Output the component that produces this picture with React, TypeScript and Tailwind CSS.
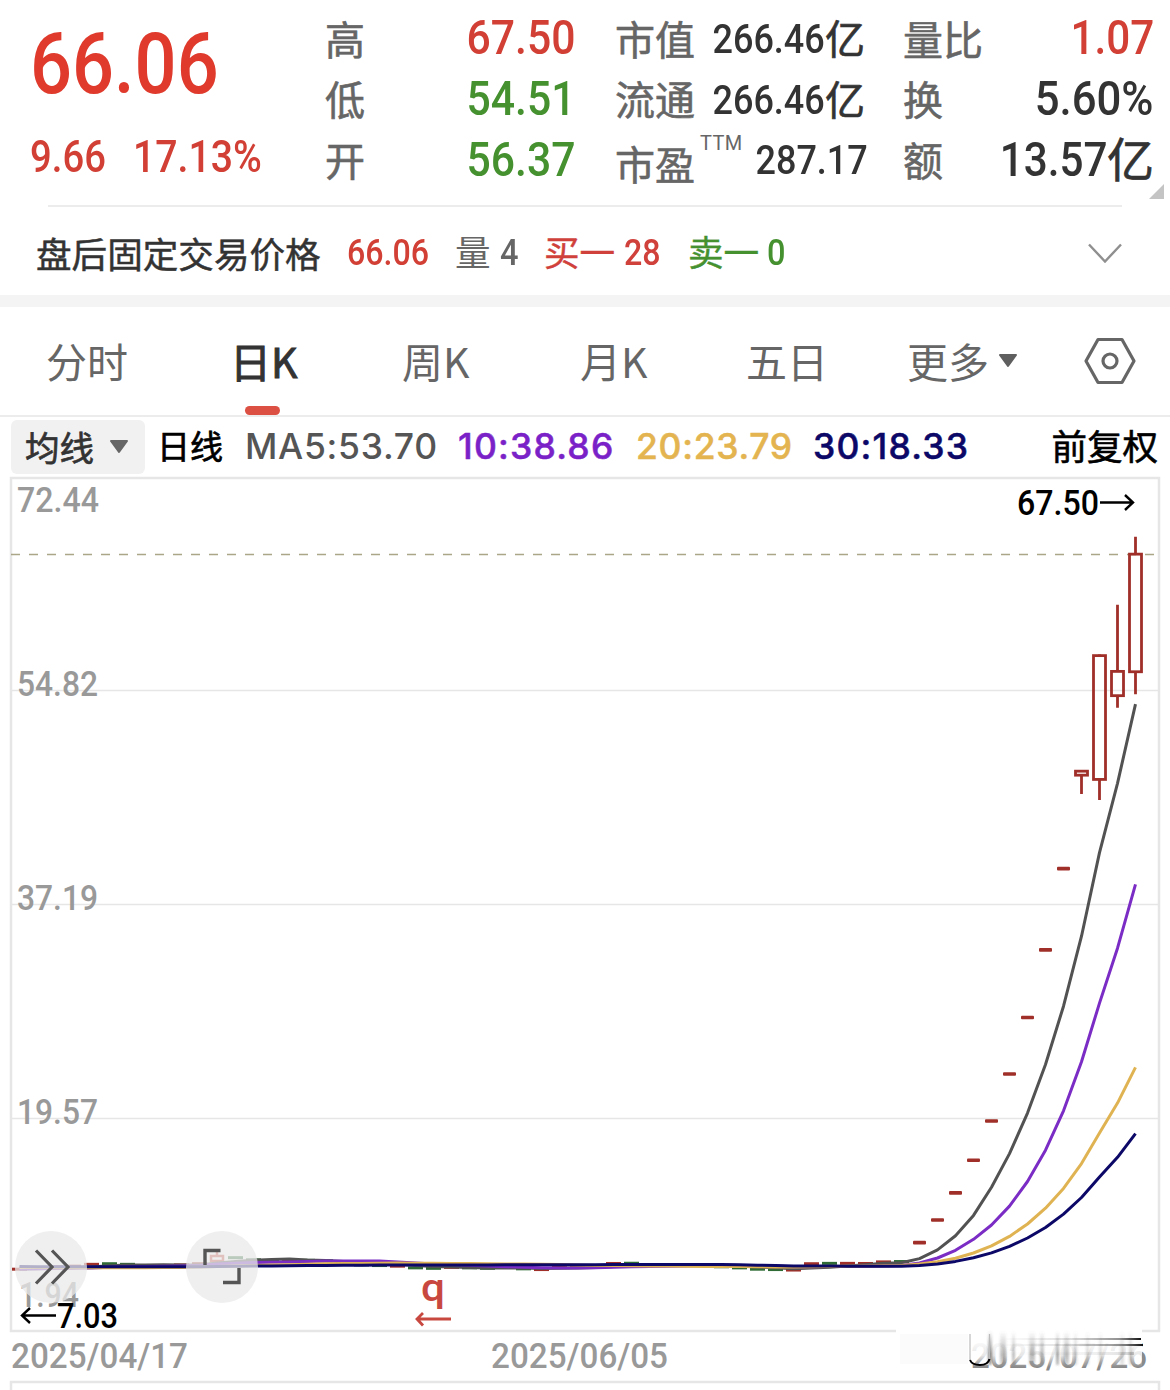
import React from 'react';

interface Candle {
    open: number;
    close: number;
    high: number;
    low: number;
}

const TOP_PRICE = 72.44;
const TOP_Y = 476.7;
const PX_PER_UNIT = 12.138;
const FIRST_X = 19.5;
const STEP = 18;

const RED = '#9f2f28';
const GREEN = '#2f6b35';

const toY = (price: number) => TOP_Y + (TOP_PRICE - price) * PX_PER_UNIT;
const toX = (index: number) => FIRST_X + index * STEP;

// Closes before the rally, negative values mark a falling day
const quietCloses = [
    7.15, -7.25, 7.35, 7.4, 7.55, -7.6, -7.55, 7.4, -7.45, 7.5, 7.6, 8.3, -8.1, -7.92, -7.8, 7.82, -7.88, -7.85,
    -7.6, -7.5, -7.45, 7.4, -7.26, -7.22, 7.3, -7.26, -7.22, 7.3, -7.18, 7.12, 7.3, 7.4, 7.45, 7.62, -7.64, -7.5,
    7.48, -7.48, -7.45, -7.35, -7.26, -7.15, -7.12, 7.08, 7.6, -7.63, 7.63, 7.62, 7.75, -7.78,
];

const limitCloses = [9.34, 11.2, 13.44, 16.13, 19.36, 23.23, 27.88, 33.46, 40.15];

const rally: Candle[] = [
    { open: 47.85, close: 48.18, high: 48.18, low: 46.3 },
    { open: 47.5, close: 57.7, high: 57.8, low: 45.8 },
    { open: 54.4, close: 56.4, high: 61.9, low: 53.4 },
    { open: 56.37, close: 66.06, high: 67.5, low: 54.51 },
];

const closes = [...quietCloses.map(Math.abs), ...limitCloses, ...rally.map((c) => c.close)];

// Sessions left of the visible range, needed for the first averages
const history = [...Array(18).fill(7.5), ...Array(12).fill(7.18)];

const movingAverage = (days: number) => {
    const all = [...history, ...closes];
    return closes
        .map((_, i) => {
            const end = history.length + i + 1;
            const sum = all.slice(end - days, end).reduce((a, b) => a + b, 0);
            return `${toX(i)},${toY(sum / days).toFixed(1)}`;
        })
        .join(' ');
};

const averages = [
    { days: 5, color: '#525252' },
    { days: 10, color: '#7a2cc4' },
    { days: 20, color: '#e0b352' },
    { days: 30, color: '#0c0868' },
];

const gridLines = [
    { label: '54.82', y: 690.5 },
    { label: '37.19', y: 904.5 },
    { label: '19.57', y: 1118.5 },
];

// Vertical streaks over the last date: x, width, opacity
const streaks = [
    [988, 4, 0.9],
    [1000, 6, 0.5],
    [1012, 3, 0.5],
    [1029, 6, 0.5],
    [1040, 4, 0.5],
    [1056, 3, 0.7],
    [1064, 5, 0.5],
    [1074, 3, 0.4],
    [1086, 3, 0.3],
    [1099, 3, 0.3],
    [1120, 4, 0.3],
    [1129, 3, 0.4],
];

const NUM = "font-['Roboto','Noto_Sans_CJK_SC',sans-serif] font-medium whitespace-nowrap inline-block";

interface NumProps {
    children: React.ReactNode;
    className?: string;
}

const Num = ({ children, className = '' }: NumProps) => (
    <span className={`${NUM} ${className}`}>{children}</span>
);

const Label = ({ children }: { children: React.ReactNode }) => (
    <span className="pb-1 text-[40px] text-[#666666] whitespace-nowrap [-webkit-text-stroke:0.6px_#666666]">{children}</span>
);

const Yi = ({ className }: { className: string }) => (
    <span className={`[-webkit-text-stroke:0.7px_#333333] ${className}`}>亿</span>
);

const QuoteHeader = () => (
    <header className="h-[205px] flex pt-[9px] leading-none">
        <div className="w-[325px] shrink-0 pl-[30px] text-[#df3a2c]">
            <div className="h-[112px] flex items-center">
                <Num className="pb-0.5 text-[85px] origin-left scale-x-[0.87]">66.06</Num>
            </div>
            <div className="h-[73px] flex items-center text-[43.5px] text-[#d13f35]">
                <div className="w-[103px] flex">
                    <Num className="origin-left scale-x-[0.88]">9.66</Num>
                </div>
                <Num className="origin-left scale-x-[0.9]">17.13%</Num>
            </div>
        </div>

        <div className="w-[250px] shrink-0">
            <div className="h-[61px] flex items-center justify-between">
                <Label>高</Label>
                <Num className="pb-1 text-[48px] text-[#d13f35] origin-right scale-x-[0.89]">67.50</Num>
            </div>
            <div className="h-[60px] flex items-center justify-between">
                <Label>低</Label>
                <Num className="pb-0.5 text-[48px] text-[#45902f] origin-right scale-x-[0.89]">54.51</Num>
            </div>
            <div className="h-[61px] flex items-center justify-between">
                <Label>开</Label>
                <Num className="pb-0.5 text-[48px] text-[#45902f] origin-right scale-x-[0.89]">56.37</Num>
            </div>
        </div>

        <div className="w-[250px] shrink-0 ml-10 text-[#333333]">
            <div className="h-[61px] flex items-center justify-between">
                <Label>市值</Label>
                <div className="flex items-center">
                    <Num className="text-[40px] origin-right scale-x-[0.9]">266.46</Num>
                    <Yi className="pb-1.5 text-[40px]" />
                </div>
            </div>
            <div className="h-[60px] flex items-center justify-between">
                <Label>流通</Label>
                <div className="flex items-center">
                    <Num className="pt-0.5 text-[40px] origin-right scale-x-[0.9]">266.46</Num>
                    <Yi className="pb-1 text-[40px]" />
                </div>
            </div>
            <div className="h-[61px] flex items-center justify-between">
                <div className="flex items-start pt-2">
                    <Label>市盈</Label>
                    <span className="font-['Roboto',sans-serif] text-[20px] text-[#666666] tracking-[0.4px] ml-[5px] -mt-2.5">TTM</span>
                </div>
                <Num className="text-[40px] origin-right scale-x-[0.9]">287.17</Num>
            </div>
        </div>

        <div className="w-[251px] shrink-0 ml-[38px] text-[#333333]">
            <div className="h-[61px] flex items-center justify-between">
                <Label>量比</Label>
                <Num className="pb-1 text-[48px] text-[#d13f35] origin-right scale-x-[0.88]">1.07</Num>
            </div>
            <div className="h-[60px] flex items-center justify-between">
                <Label>换</Label>
                <Num className="pb-0.5 text-[48px] origin-right scale-x-[0.91]">5.60%</Num>
            </div>
            <div className="h-[61px] flex items-center justify-between">
                <Label>额</Label>
                <div className="flex items-center">
                    <Num className="pb-0.5 text-[48px] origin-right scale-x-[0.88]">13.57</Num>
                    <Yi className="pb-2 text-[47px]" />
                </div>
            </div>
        </div>
        <svg width="15" height="15" viewBox="0 0 15 15" className="mt-[175px] -ml-[5px] shrink-0">
            <path d="M15 0V15H0Z" fill="#c4c4c4" />
        </svg>
    </header>
);

const AfterHours = () => (
    <div className="mx-12 h-[90px] border-t-2 border-[#ececec]">
        <div className="-ml-3 h-[91px] flex items-center text-[35.6px] leading-none whitespace-nowrap">
            <span className="w-[311px] text-[#333333] [-webkit-text-stroke:0.5px_#333333]">盘后固定交易价格</span>
            <div className="w-[108px] flex text-[#d13f35]">
                <Num className="text-[37px] origin-left scale-x-[0.87]">66.06</Num>
            </div>
            <span className="w-[45px] pb-[3px] text-[#666666]">量</span>
            <div className="w-[44px] flex text-[#666666]">
                <Num className="text-[37px] origin-left scale-x-[0.88]">4</Num>
            </div>
            <span className="w-[80px] pb-[3px] text-[#d0413c] [-webkit-text-stroke:0.4px_#d0413c]">买一</span>
            <div className="w-[64px] flex text-[#d0413c]">
                <Num className="text-[37px] origin-left scale-x-[0.87]">28</Num>
            </div>
            <span className="w-[79px] pb-[3px] text-[#45902f] [-webkit-text-stroke:0.4px_#45902f]">卖一</span>
            <Num className="text-[37px] text-[#45902f] origin-left scale-x-[0.88]">0</Num>
            <svg width="36" height="22" viewBox="0 0 36 22" fill="none" className="ml-auto -mr-px">
                <path d="M2 2.5L18 19.5L34 2.5" stroke="#8f8f8f" strokeWidth="2.4" />
            </svg>
        </div>
    </div>
);

const Tabs = () => (
    <nav className="h-[110px] flex items-center border-b-2 border-[#ececec] pl-[46px] text-[41px] leading-none text-[#666666] whitespace-nowrap">
        <span className="w-[184px] pb-px">分时</span>
        <div className="w-[172px] h-full flex items-center relative text-[#333333] pb-px [-webkit-text-stroke:1px_#333333]">
            日K
            <span className="absolute left-[15px] bottom-0 w-[35px] h-[9px] rounded-full bg-[#dc5043]" />
        </div>
        <span className="w-[178px] pb-px">周K</span>
        <span className="w-[166px] pb-px">月K</span>
        <span className="w-[161px] pb-px">五日</span>
        <div className="w-[177px] flex items-center">
            <span className="pb-px">更多</span>
            <svg width="18" height="14" viewBox="0 0 18 14" className="ml-2.5">
                <path d="M1 1H17L9 12Z" fill="#5f5f5f" stroke="#5f5f5f" strokeWidth="2" strokeLinejoin="round" />
            </svg>
        </div>
        <svg width="52" height="48" viewBox="0 0 52 48" fill="none" stroke="#666666" strokeWidth="3.2" strokeLinejoin="round">
            <path d="M14 2.500H38L50 24L38 45.500H14L2 24Z" />
            <circle cx="26" cy="24" r="7" />
        </svg>
    </nav>
);

const MaLegend = () => (
    <div className="h-[59px] flex items-center pl-[11px] pr-3 text-[34.5px] leading-none whitespace-nowrap">
        <div className="w-[134px] h-[54px] mr-3 rounded-md bg-[#f1f1f1] flex items-center pl-3.5 text-[#333333] [-webkit-text-stroke:0.7px_#333333]">
            <span>均线</span>
            <svg width="18" height="14" viewBox="0 0 18 14" className="ml-4">
                <path d="M1 1H17L9 12Z" fill="#666666" stroke="#666666" strokeWidth="2" strokeLinejoin="round" />
            </svg>
        </div>
        <span className="w-[88px] pb-0.5 text-[33px] text-black [-webkit-text-stroke:0.7px_#000000]">日线</span>
        <div className="flex font-['Inter',sans-serif] font-medium text-[35.5px] tracking-[1.2px]">
            <span className="w-[213px] text-[#555555] tracking-[0.7px]">MA5:53.70</span>
            <span className="w-[178px] text-[#7a22c8] [-webkit-text-stroke:0.5px_#7a22c8]">10:38.86</span>
            <span className="w-[177px] text-[#e3b450] tracking-[0.7px] [-webkit-text-stroke:0.5px_#e3b450]">20:23.79</span>
            <span className="text-[#0c0868] [-webkit-text-stroke:0.5px_#0c0868]">30:18.33</span>
        </div>
        <span className="ml-auto pb-1 text-[35.5px] text-black [-webkit-text-stroke:0.6px_#000000]">前复权</span>
    </div>
);

const DayCandle = ({ candle, x }: { candle: Candle; x: number }) => {
    const top = toY(Math.max(candle.open, candle.close));
    const bottom = toY(Math.min(candle.open, candle.close));
    return (
        <g stroke={RED} strokeWidth="2.8" fill="none">
            <path d={`M${x} ${toY(candle.high)}V${top}M${x} ${bottom}V${toY(candle.low)}`} />
            <rect x={x - 6} y={top} width="12" height={bottom - top} />
        </g>
    );
};

const Chart = () => (
    <svg
        width="1170"
        height="914"
        viewBox="0 476 1170 914"
        fill="none"
        className="block font-['Roboto',sans-serif] font-medium text-[35px]"
    >
        <defs>
            <linearGradient id="fade" x1="0" y1="0" x2="0" y2="1">
                <stop offset="0" stopColor="#ffffff" stopOpacity="1" />
                <stop offset="0.6" stopColor="#ffffff" stopOpacity="0.8" />
                <stop offset="1" stopColor="#ffffff" stopOpacity="0" />
            </linearGradient>
            <linearGradient id="streak" x1="0" y1="0" x2="0" y2="1">
                <stop offset="0" stopColor="#555555" stopOpacity="0" />
                <stop offset="0.7" stopColor="#555555" stopOpacity="0.8" />
                <stop offset="1" stopColor="#555555" stopOpacity="0.5" />
            </linearGradient>
            <linearGradient id="bar" x1="0" y1="0" x2="1" y2="0">
                <stop offset="0" stopColor="#222222" stopOpacity="0" />
                <stop offset="0.5" stopColor="#222222" stopOpacity="0.15" />
                <stop offset="0.85" stopColor="#222222" stopOpacity="0.5" />
                <stop offset="1" stopColor="#111111" stopOpacity="1" />
            </linearGradient>
            <filter id="smear" x="-50%" y="-20%" width="200%" height="140%">
                <feGaussianBlur stdDeviation="1.3 1" />
            </filter>
        </defs>

        <rect x="11" y="478" width="1148" height="853" stroke="#e6e6e6" strokeWidth="2.5" />
        {gridLines.map((line) => (
            <path key={line.label} d={`M12 ${line.y}H1158`} stroke="#e6e6e6" strokeWidth="1.5" />
        ))}
        <path d="M11 1390V1382H1159V1390" stroke="#e6e6e6" strokeWidth="2.5" />

        <g fill="#999999">
            <text x="17" y="512" textLength="82" lengthAdjust="spacingAndGlyphs">72.44</text>
            {gridLines.map((line) => (
                <text key={line.label} x="17" y={line.y + 5.5} textLength="81" lengthAdjust="spacingAndGlyphs">
                    {line.label}
                </text>
            ))}
            <text x="19" y="1307" textLength="60" lengthAdjust="spacingAndGlyphs">1.94</text>
            <text x="11" y="1368" textLength="177" lengthAdjust="spacingAndGlyphs">2025/04/17</text>
            <text x="491" y="1368" textLength="177" lengthAdjust="spacingAndGlyphs">2025/06/05</text>
        </g>

        <path d="M11 554.5H1156" stroke="#aba688" strokeWidth="1.5" strokeDasharray="9 9" />

        {quietCloses.map((value, i) =>
            i === 11 ? (
                <path key={i} d="M217 1249V1255M211 1256H223V1261H211Z" stroke="#c64a3d" strokeWidth="2.5" />
            ) : (
                <rect key={i} x={toX(i) - 7.5} y={toY(Math.abs(value)) - 1.5} width="15" height="3" fill={value < 0 ? GREEN : RED} />
            ),
        )}
        {limitCloses.map((value, i) => (
            <rect
                key={value}
                x={toX(quietCloses.length + i) - 6.5}
                y={toY(value) - 1.8}
                width="13"
                height="3.6"
                rx="1"
                fill={RED}
            />
        ))}
        {rally.map((candle, i) => (
            <DayCandle key={candle.close} candle={candle} x={toX(quietCloses.length + limitCloses.length + i)} />
        ))}

        {averages.map((avg) => (
            <polyline
                key={avg.days}
                points={movingAverage(avg.days)}
                stroke={avg.color}
                strokeWidth="3"
                strokeLinejoin="round"
            />
        ))}

        {/* High and low markers */}
        <g fill="#000000">
            <text x="1017" y="515" textLength="82" lengthAdjust="spacingAndGlyphs">67.50</text>
            <text x="57" y="1328" textLength="61" lengthAdjust="spacingAndGlyphs">7.03</text>
        </g>
        <path d="M1100 502.500H1133M1125 495L1133 502.500L1125 510" stroke="#000000" strokeWidth="2.4" />
        <path d="M56 1315.500H22M30 1308L22 1315.500L30 1323" stroke="#000000" strokeWidth="2.4" />

        <text x="421" y="1301" textLength="24" lengthAdjust="spacingAndGlyphs" className="text-[38px]" fill="#c8483f">q</text>
        <path d="M451 1319H417M423 1313L417 1319L423 1325.500" stroke="#c8483f" strokeWidth="2.8" />

        {/* Floating buttons */}
        <circle cx="51" cy="1267" r="36" fill="#e9e9e9" fillOpacity="0.75" />
        <circle cx="222" cy="1267" r="36" fill="#e9e9e9" fillOpacity="0.75" />
        <path d="M36 1250.500L52 1267L36 1283.500M52 1250.500L68 1267L52 1283.500" stroke="#555555" strokeWidth="3.2" />
        <path d="M205 1265V1250.500H220.500M239 1268V1282.500H223" stroke="#555555" strokeWidth="3.4" />

        {/* Last date, smeared out towards the top */}
        <rect x="896" y="1328" width="246" height="10" fill="#ffffff" />
        <rect x="900" y="1334" width="68" height="30" fill="#fbfbfb" />
        <text x="971" y="1368" textLength="176" lengthAdjust="spacingAndGlyphs" fill="#8a8a8a">2025/07/26</text>
        <rect x="968" y="1338" width="174" height="29" fill="url(#fade)" />
        <g fill="url(#streak)" filter="url(#smear)">
            {streaks.map(([x, width, opacity]) => (
                <rect key={x} x={x} y="1331" width={width} height="34" opacity={opacity} />
            ))}
        </g>
        <path d="M970 1334V1360M989.500 1359V1334" stroke="#bbbbbb" strokeWidth="1.2" />
        <path d="M970 1360Q972 1365 980 1365Q988 1365 989.500 1359" stroke="#000000" strokeWidth="2" />
        <rect x="1000" y="1338" width="141" height="2" fill="url(#bar)" />
        <rect x="1000" y="1344" width="143" height="2" fill="url(#bar)" />
        <rect x="1000" y="1352" width="134" height="3" fill="url(#bar)" opacity="0.2" />
    </svg>
);

export default function App() {
    return (
        <div className="w-[1170px] h-[1390px] overflow-hidden bg-white font-['Noto_Sans_CJK_SC',sans-serif]">
            <QuoteHeader />
            <AfterHours />
            <div className="h-3 bg-[#f4f4f4]" />
            <Tabs />
            <MaLegend />
            <Chart />
        </div>
    );
}
